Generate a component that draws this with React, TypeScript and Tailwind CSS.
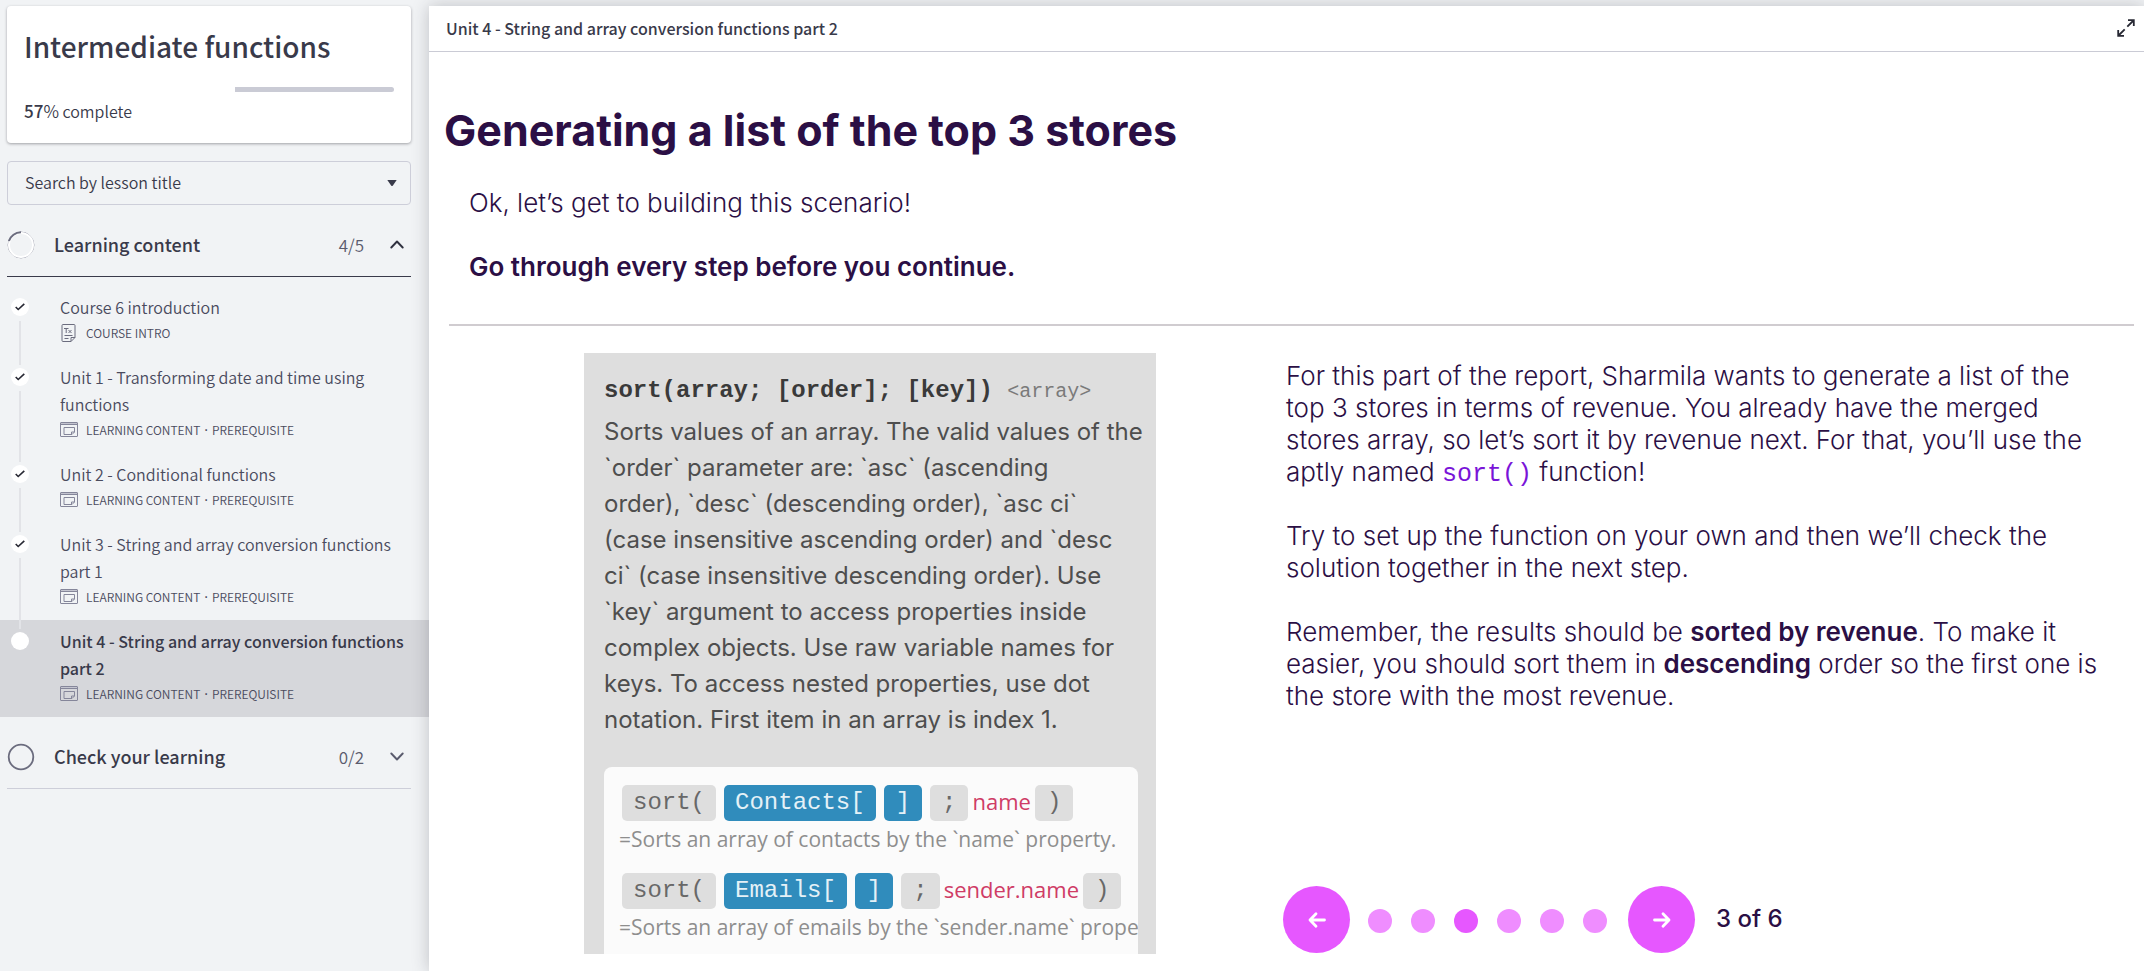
import type { ReactNode } from 'react';

type Lesson = {
  title: string;
  meta: string[];
  icon: 'text' | 'module';
  done: boolean;
  current?: boolean;
};

const lessons: Lesson[] = [
  { title: 'Course 6 introduction', meta: ['COURSE INTRO'], icon: 'text', done: true },
  {
    title: 'Unit 1 - Transforming date and time using functions',
    meta: ['LEARNING CONTENT', 'PREREQUISITE'],
    icon: 'module',
    done: true,
  },
  {
    title: 'Unit 2 - Conditional functions',
    meta: ['LEARNING CONTENT', 'PREREQUISITE'],
    icon: 'module',
    done: true,
  },
  {
    title: 'Unit 3 - String and array conversion functions part 1',
    meta: ['LEARNING CONTENT', 'PREREQUISITE'],
    icon: 'module',
    done: true,
  },
  {
    title: 'Unit 4 - String and array conversion functions part 2',
    meta: ['LEARNING CONTENT', 'PREREQUISITE'],
    icon: 'module',
    done: false,
    current: true,
  },
];

function TextIcon() {
  return (
    <svg width="18" height="18" viewBox="0 0 18 18" fill="none" stroke="#6b6c7e" aria-hidden="true">
      <path d="M3 .5h11a1 1 0 0 1 1 1v12l-4 4H3a1 1 0 0 1-1-1v-15a1 1 0 0 1 1-1z" />
      <path d="M11 17.5v-4h4M4.500 11.500h8M4.500 14.500h4M4 4.500h4.500M6.200 4.500v4.500M8.500 6l3 3M11.500 6l-3 3" />
    </svg>
  );
}

function ModuleIcon() {
  return (
    <svg width="18" height="18" viewBox="0 0 18 18" fill="none" stroke="#85869a" aria-hidden="true">
      <rect x=".5" y="1.500" width="17" height="14" rx=".5" />
      <path d="M1 2.500h16" stroke="#c4c5d0" />
      <path d="M.5 3.500h17M4 6.500h10.500v4.500l-2.500 2.500H4zM11.500 13.500v-2.500h3" />
    </svg>
  );
}

function Check() {
  return (
    <svg width="10" height="8" viewBox="0 0 10 8" fill="none" stroke="#272833" strokeWidth="1.600" aria-hidden="true">
      <path d="M.7 4l2.500 2.500L9.300 .8" />
    </svg>
  );
}

function Chevron({ up }: { up?: boolean }) {
  return (
    <svg
      width="14"
      height="9"
      viewBox="0 0 14 9"
      fill="none"
      stroke={up ? '#30313f' : '#5a5b6d'}
      strokeWidth="1.900"
      strokeLinecap="round"
      strokeLinejoin="round"
      aria-hidden="true"
    >
      <path d={up ? 'M1.300 7.500L7 1.500l5.700 6' : 'M1.300 1.500L7 7.500l5.700-6'} />
    </svg>
  );
}

function SectionHeader({ title, count, open }: { title: string; count: string; open?: boolean }) {
  return (
    <button
      type="button"
      aria-expanded={!!open}
      className={`flex w-full items-center border-b pt-[22px] pb-[14px] text-left ${open ? 'border-[#393a4a]' : 'border-[#cdced9]'}`}
    >
      <svg width="28" height="28" viewBox="0 0 28 28" fill="none" aria-hidden="true">
        {open ? (
          <>
            <circle cx="14" cy="14" r="12.900" stroke="#8d8e9f" />
            <circle cx="14" cy="14" r="12" stroke="#fff" strokeWidth="2" />
            <path d="M1.900 10A12.700 12.700 0 0 1 14 1.300" stroke="#6b6c7e" strokeWidth="2" />
          </>
        ) : (
          <circle cx="14" cy="14" r="12.300" stroke="#6b6c7e" strokeWidth="1.800" />
        )}
      </svg>
      <span className="ml-[19px] grow text-[18px] leading-[35px] font-medium">{title}</span>
      <span className="mr-[26px] text-[17px] leading-[35px] font-[350] text-[#5a5b6d]">{count}</span>
      <span className="mr-[7px]">
        <Chevron up={open} />
      </span>
    </button>
  );
}

function LessonRow({ lesson, last }: { lesson: Lesson; last: boolean }) {
  return (
    <li className={`relative ${lesson.current ? 'bg-[#d6d7db]' : ''}`}>
      <a href="#lesson" className="flex pt-2 pr-4 pb-[11px] pl-[11px]" aria-current={lesson.current ? 'page' : undefined}>
        <span className="mt-1 flex size-[18px] shrink-0 items-center justify-center rounded-full bg-white">
          {lesson.done && <Check />}
        </span>
        <span className="ml-[31px] block grow">
          <span
            className={`block text-[16px] leading-[27px] ${
              lesson.current ? 'font-medium text-[#393a4a]' : 'font-[350] text-[#4a4b5e]'
            }`}
          >
            {lesson.title}
          </span>
          <span className="flex h-6 items-center gap-2 text-[12px] font-[350] text-[#4a4b5e]">
            {lesson.icon === 'text' ? <TextIcon /> : <ModuleIcon />}
            <span>
              {lesson.meta[0]}
              {lesson.meta[1] && <span className="px-px font-['Open_Sans',sans-serif] font-semibold"> · </span>}
              {lesson.meta[1]}
            </span>
          </span>
        </span>
      </a>
      {!last && <span className="absolute top-[35px] -bottom-[9px] left-[19px] z-10 w-[2px] bg-[#e2e3e7]" />}
    </li>
  );
}

function Chip({ children, blue, narrow }: { children: ReactNode; blue?: boolean; narrow?: boolean }) {
  return (
    <span
      className={`rounded-[5px] font-['Liberation_Mono',monospace] text-[24px] leading-9 whitespace-pre ${
        narrow ? 'px-3' : 'px-[11px]'
      } ${blue ? 'bg-[#308cbc] text-[#e4f1f7]' : 'bg-[#dedede] text-[#686868]'}`}
    >
      {children}
    </span>
  );
}

function Example({ source, arg, note }: { source: string; arg: string; note: string }) {
  return (
    <div className="mb-[15px]">
      <div className="flex pl-[18px] font-['Open_Sans',sans-serif]">
        <Chip>sort(</Chip>
        <span className="ml-2 flex gap-2">
          <Chip blue>{source}</Chip>
          <Chip blue narrow>
            ]
          </Chip>
          <Chip narrow>;</Chip>
        </span>
        <span className="mx-[4px] text-[22px] leading-8 text-[#cf3c66]">{arg}</span>
        <Chip narrow>)</Chip>
      </div>
      <p className="pl-[15px] font-['Open_Sans',sans-serif] text-[21px] leading-[37px] whitespace-nowrap text-[#8e8e8e]">
        {note}
      </p>
    </div>
  );
}

function Arrow({ right }: { right?: boolean }) {
  return (
    <svg
      width="20"
      height="18"
      viewBox="0 0 20 18"
      fill="none"
      stroke="#fff"
      strokeWidth="2.800"
      strokeLinecap="round"
      strokeLinejoin="round"
      aria-hidden="true"
    >
      <path d={right ? 'M2.500 9h14.500M11 2.700L17 9l-6 6.300' : 'M17.500 9H3M9 2.700L3 9l6 6.300'} />
    </svg>
  );
}

export default function App() {
  const steps = [1, 2, 3, 4, 5, 6];
  return (
    <div className="flex min-h-screen bg-[#f1f3f5] pt-[6px] font-['Noto_Sans_CJK_SC',sans-serif] text-[#393a4a]">
      <aside className="w-[429px] shrink-0">
        <div className="pr-[18px] pl-[7px]">
          <section className="rounded-[4px] bg-white px-[17px] pt-5 pb-[19px] shadow-[0_1px_3px_rgba(39,40,51,0.4)]">
            <h1 className="text-[28px] leading-10 font-medium">Intermediate functions</h1>
            <div className="mt-[21px] flex h-[5px] justify-end overflow-hidden rounded-full">
              <div className="w-[43%] bg-[#cacbd5]" />
            </div>
            <p className="mt-[6px] text-[16px] leading-[26px] font-[350]">
              <span className="text-[17px] leading-none font-medium">57</span>
              <span className="text-[17px] leading-none">%</span> complete
            </p>
          </section>
          <div className="mt-[18px] grid items-center">
            <select
              aria-label="Search by lesson title"
              className="col-start-1 row-start-1 h-11 appearance-none rounded-[4px] border border-[#cdced9] pb-[3px] pl-[17px] text-[16px] font-[350] text-[#393a4a]"
            >
              <option>Search by lesson title</option>
            </select>
            <svg
              className="pointer-events-none col-start-1 row-start-1 mr-[14px] justify-self-end"
              width="10"
              height="6"
              viewBox="0 0 10 6"
              fill="#393a4a"
              aria-hidden="true"
            >
              <path d="M.3 0h9.400L5.700 5.700q-.7.600-1.400 0z" />
            </svg>
          </div>
          <SectionHeader title="Learning content" count="4/5" open />
        </div>
        <ul className="mt-[9px]">
          {lessons.map((lesson, i) => (
            <LessonRow key={lesson.title} lesson={lesson} last={i === lessons.length - 1} />
          ))}
        </ul>
        <div className="pr-[18px] pl-[7px]">
          <SectionHeader title="Check your learning" count="0/2" />
        </div>
      </aside>

      <main className="relative flex min-w-0 grow flex-col bg-white shadow-[0_0_16px_rgba(39,40,51,0.25)]">
        <header className="flex h-[46px] items-center justify-between border-b border-[#cacbd5] pr-[9px] pb-[2px] pl-[17px]">
          <h2 className="text-[16px] font-medium">Unit 4 - String and array conversion functions part 2</h2>
          <button type="button" aria-label="Full screen">
            <svg width="18" height="18" viewBox="0 0 18 18" fill="none" stroke="#272833" strokeWidth="1.800" aria-hidden="true">
              <path d="M11 1.200h5.800v5.800M16.500 1.500l-6.200 6.200M7 16.800H1.200v-5.800M1.500 16.500l6.200-6.200" />
            </svg>
          </button>
        </header>

        <div className="flex grow flex-col font-['Inter',sans-serif] text-[#2b0f45]">
          <h3 className="pt-[50px] pl-[15px] text-[43px] leading-[56px] font-bold">Generating a list of the top 3 stores</h3>
          <p className="mt-[29px] pl-10 text-[26px] leading-8 font-light">Ok, let’s get to building this scenario!</p>
          <p className="mt-8 pl-10 text-[26px] leading-8 font-semibold">Go through every step before you continue.</p>
          <hr className="mt-[41px] mr-[10px] ml-5 border-t-2 border-[#d0ccd0]" />

          <div className="mt-[27px] grid grid-cols-2 pr-8 pb-4 pl-[27px]">
            <article className="h-[601px] w-[572px] justify-self-center overflow-hidden bg-[#dedede] px-5 pt-5 text-[#4e4e4e]">
              <h4 className="font-['Liberation_Mono',monospace] text-[24px] leading-9 whitespace-nowrap">
                <b className="text-[#3a3a3a]">sort(array; [order]; [key])</b>{' '}
                <span className="text-[20px] text-[#7a7a7a]">&lt;array&gt;</span>
              </h4>
              <p className="mt-1 text-[24px] leading-9 whitespace-nowrap">
                Sorts values of an array. The valid values of the
                <br />
                `order` parameter are: `asc` (ascending
                <br />
                order), `desc` (descending order), `asc ci`
                <br />
                (case insensitive ascending order) and `desc
                <br />
                ci` (case insensitive descending order). Use
                <br />
                `key` argument to access properties inside
                <br />
                complex objects. Use raw variable names for
                <br />
                keys. To access nested properties, use dot
                <br />
                notation. First item in an array is index 1.
              </p>
              <div className="mt-[29px] mr-[-2px] overflow-hidden rounded-t-[8px] bg-[#fbfbfb] pt-[18px]">
                <Example source="Contacts[" arg="name" note="=Sorts an array of contacts by the `name` property." />
                <Example source="Emails[" arg="sender.name" note="=Sorts an array of emails by the `sender.name` property." />
              </div>
            </article>

            <div className="flex flex-col justify-between pt-[7px] pb-px">
              <div className="mr-[6px] flex flex-col gap-8 pl-[2px] text-[26px] leading-8 font-light">
                <p>
                  For this part of the report, Sharmila wants to generate a list of the top 3 stores in terms of revenue. You
                  already have the merged stores array, so let’s sort it by revenue next. For that, you’ll use the aptly named{' '}
                  <code className="font-['Liberation_Mono',monospace] text-[25px] leading-none text-[#7a14d8]">sort()</code>{' '}
                  function!
                </p>
                <p>
                  Try to set up the function on your own and then we’ll check the solution together in the next step.
                </p>
                <p>
                  Remember, the results should be <b className="font-semibold">sorted by revenue</b>. To make it easier, you
                  should sort them in <b className="font-semibold">descending</b> order so the first one is the store with the
                  most revenue.
                </p>
              </div>
              <nav aria-label="Steps" className="-ml-px flex items-center">
                <button
                  type="button"
                  aria-label="Previous step"
                  className="flex size-[67px] items-center justify-center rounded-full bg-[#e657ff]"
                >
                  <Arrow />
                </button>
                <div className="mr-[21px] ml-[18px] flex gap-[19px] pt-[2px]">
                  {steps.map((n) => (
                    <button
                      key={n}
                      type="button"
                      aria-label={`Step ${n}`}
                      className={`size-6 rounded-full ${n === 3 ? 'bg-[#e657ff]' : 'bg-[#ef8dff]'}`}
                    />
                  ))}
                </div>
                <button
                  type="button"
                  aria-label="Next step"
                  className="flex size-[67px] items-center justify-center rounded-full bg-[#e657ff]"
                >
                  <Arrow right />
                </button>
                <span className="ml-[21px] pb-[2px] text-[24px] font-medium">3 of 6</span>
              </nav>
            </div>
          </div>
        </div>
      </main>
    </div>
  );
}
